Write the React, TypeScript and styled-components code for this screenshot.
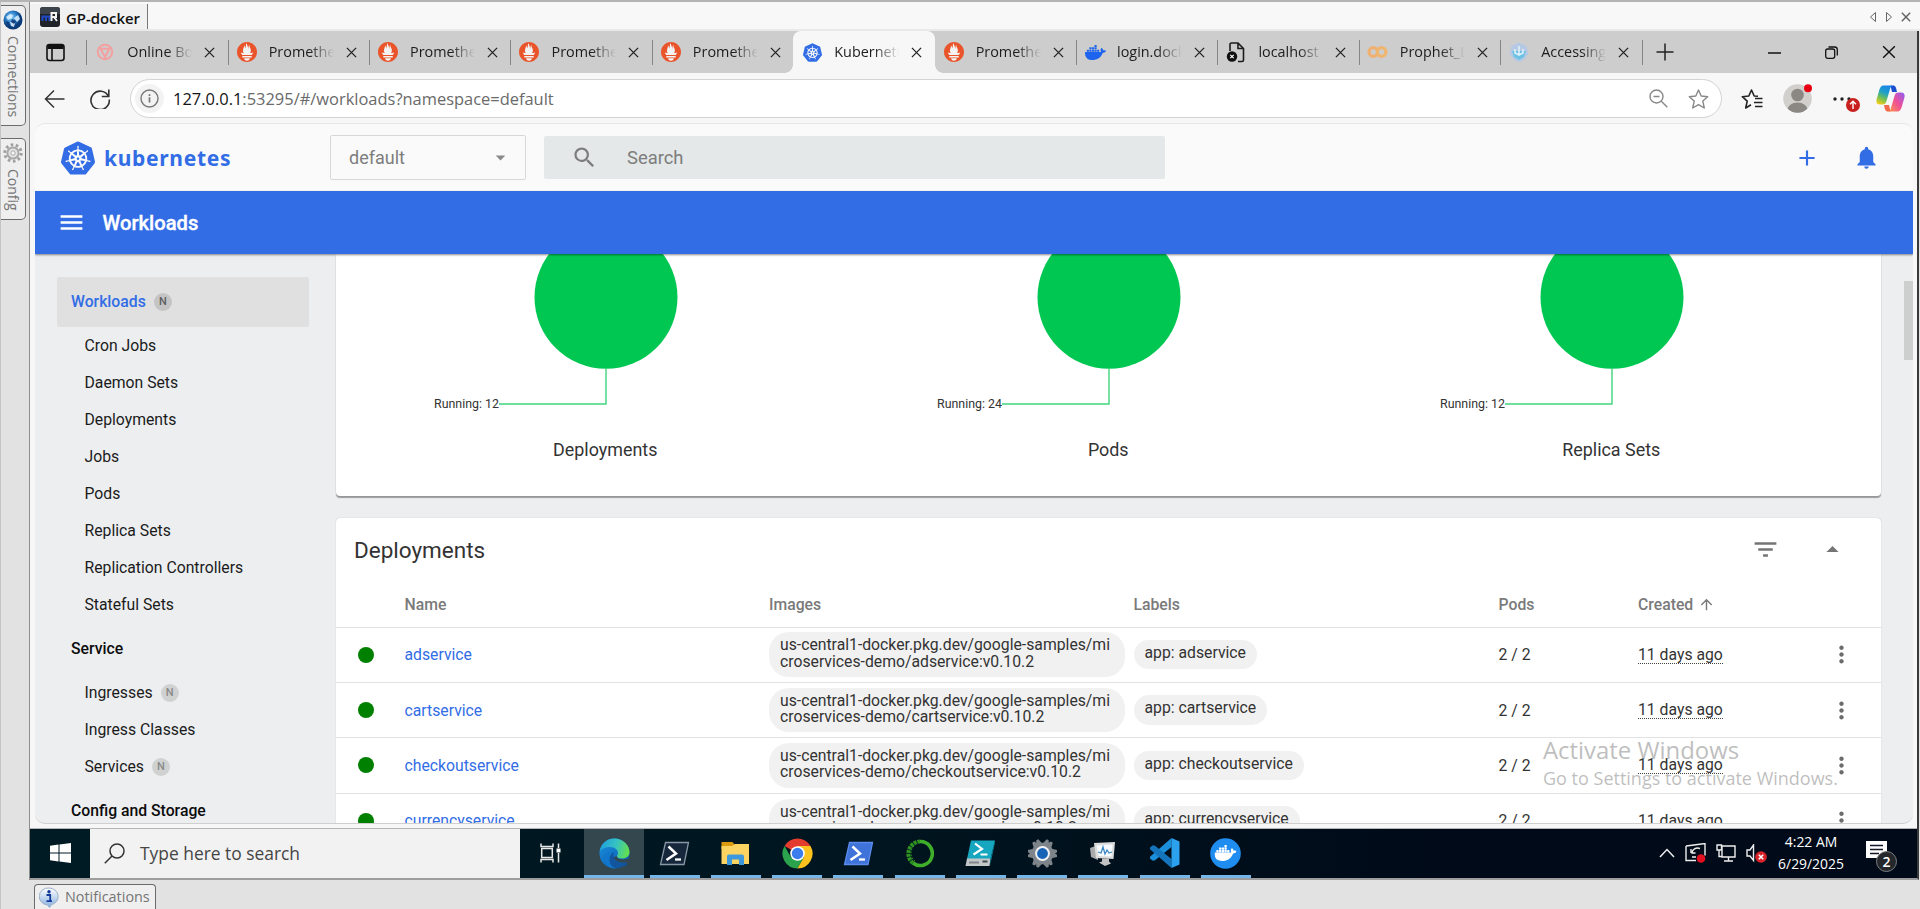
import React from "react";
import styled, { createGlobalStyle, css } from "styled-components";
import { SiPrometheus, SiKubernetes, SiDocker } from "react-icons/si";
import {
  MdSearch,
  MdNotifications,
  MdAdd,
  MdMenu,
  MdFilterList,
  MdArrowDropDown,
  MdArrowDropUp,
  MdMoreVert,
  MdArrowUpward,
} from "react-icons/md";

const UI = `"Open Sans", "Noto Sans", sans-serif`;
const BLUE = "#326de6";
const CHROME = "#f7f7f7";

const GlobalStyle = createGlobalStyle`
  *, *::before, *::after { box-sizing: border-box; }
  body { margin: 0; background: #e2e2e2; overflow: hidden; }
  svg { display: block; flex: none; }
`;

/* ---------- remote manager shell ---------- */

const Shell = styled.div`
  display: grid;
  grid-template-columns: 29px 1fr;
  grid-template-rows: 878px 29px;
  width: 1920px;
  height: 909px;
  background: #e2e2e2;
  border-top: 2px solid #b4b4b4;
  font-family: ${UI};
  color: #222;
  overflow: hidden;
`;

const DockRail = styled.aside`
  display: flex;
  flex-direction: column;
  gap: 12px;
  padding-top: 3px;
  border-left: 1px solid #c4c4c4;
`;

const DockTab = styled.div<{ $height: number }>`
  display: flex;
  flex-direction: column;
  align-items: center;
  gap: 6px;
  width: 25px;
  height: ${(p) => p.$height}px;
  padding-top: 4px;
  border: 1.5px solid #6b6b6b;
  border-left: none;
  border-radius: 0 5px 5px 0;
  background: #efefef;
`;

const DockLabel = styled.span`
  writing-mode: vertical-rl;
  font-size: 14px;
  line-height: 20px;
  color: #757575;
`;

const Session = styled.main`
  display: flex;
  flex-direction: column;
  min-width: 0;
  border-left: 1px solid #8e8e8e;
`;

const SessionBar = styled.div`
  display: flex;
  justify-content: space-between;
  height: 29px;
  flex: none;
  background: #f8f8f8;
  border-bottom: 2px solid #e9e9e9;
`;

const SessionTab = styled.div`
  display: flex;
  align-items: center;
  gap: 6px;
  width: 118px;
  height: 25px;
  margin-top: 2px;
  padding-left: 10px;
  border-right: 1.5px solid #777;
  background: #f1f1f1;
  font-size: 14.9px;
  font-weight: 600;
  color: #111;
`;

const SessionName = styled.span`
  line-height: 20px;
  padding-top: 3px;
`;

const SessionControls = styled.div`
  display: flex;
  align-items: center;
  gap: 8px;
  padding: 2px 9px 0 0;
`;

const BottomDock = styled.footer`
  grid-column: 1 / -1;
  display: flex;
  align-items: flex-end;
  padding-left: 33px;
  border-left: 1px solid #c4c4c4;
`;

const NotificationsTab = styled.div`
  display: flex;
  align-items: center;
  gap: 6px;
  width: 122px;
  height: 25px;
  padding-left: 4px;
  border: 1.5px solid #6b6b6b;
  border-bottom: none;
  border-radius: 4px 4px 0 0;
  background: #efefef;
  font-size: 14.4px;
  line-height: 20px;
  color: #757575;
`;

/* ---------- browser chrome ---------- */

const Desktop = styled.div`
  display: flex;
  flex-direction: column;
  width: 1889px;
  height: 849px;
  flex: none;
  border-right: 2px solid #3a3a3a;
  border-bottom: 2px solid #9d9d9d;
`;

const TabStrip = styled.div`
  display: flex;
  align-items: center;
  height: 42px;
  flex: none;
  background: #cdcdcd;
`;

const TabActions = styled.div`
  display: flex;
  align-items: center;
  width: 56.3px;
  padding-left: 16px;
`;

const Tab = styled.div<{ $active?: boolean; $divider?: boolean }>`
  position: relative;
  display: flex;
  align-items: center;
  width: 141.4px;
  height: 42px;
  padding-left: 9px;
  flex: none;
  &::before {
    content: "";
    position: absolute;
    left: 0;
    top: 9px;
    width: 1px;
    height: 25px;
    background: ${(p) => (p.$divider ? "#858585" : "transparent")};
  }
  ${(p) =>
    p.$active &&
    css`
      background: ${CHROME};
      border-radius: 8px 8px 0 0;
      &::before {
        left: -8px;
        top: auto;
        bottom: 0;
        width: 8px;
        height: 8px;
        background: radial-gradient(circle at 0 0, transparent 7.5px, ${CHROME} 8px);
      }
      &::after {
        content: "";
        position: absolute;
        right: -8px;
        bottom: 0;
        width: 8px;
        height: 8px;
        background: radial-gradient(circle at 100% 0, transparent 7.5px, ${CHROME} 8px);
      }
    `}
`;

const TabIcon = styled.span`
  display: flex;
  justify-content: center;
  width: 20px;
  margin-right: 12px;
`;

const TabTitle = styled.span`
  width: 65px;
  margin-right: 12px;
  overflow: hidden;
  white-space: nowrap;
  font-size: 14.4px;
  line-height: 20px;
  color: #1c1c1c;
  mask-image: linear-gradient(90deg, #000 62%, transparent 100%);
`;

const NewTab = styled.div`
  display: flex;
  align-items: center;
  width: 60px;
  height: 25px;
  padding-left: 13px;
  border-left: 1px solid #858585;
`;

const WindowControls = styled.div`
  display: flex;
  align-items: center;
  gap: 44px;
  margin-left: auto;
  padding-right: 21px;
`;

const Toolbar = styled.div`
  display: flex;
  align-items: center;
  height: 50px;
  flex: none;
  padding: 1px 0 0 14px;
  background: ${CHROME};
`;

const NavButtons = styled.div`
  display: flex;
  gap: 24px;
  width: 86px;
`;

const AddressBar = styled.div`
  display: flex;
  align-items: center;
  width: 1592px;
  height: 39px;
  padding: 0 12px 0 4px;
  border: 1.5px solid #d3d3d3;
  border-radius: 20px;
  background: #fff;
`;

const SiteInfo = styled.span`
  display: grid;
  place-items: center;
  width: 29px;
  height: 29px;
  margin-right: 9px;
  border-radius: 50%;
  background: #f3f3f3;
`;

const Url = styled.span`
  flex: 1;
  font-size: 16.45px;
  line-height: 22px;
  color: #6a6a6a;
`;

const UrlHost = styled.span`
  color: #151515;
`;

const AddressActions = styled.div`
  display: flex;
  align-items: center;
  gap: 20px;
`;

const ToolbarActions = styled.div`
  display: flex;
  align-items: center;
  padding-left: 19px;
`;

const Avatar = styled.div`
  position: relative;
  margin: 0 18px 0 20px;
`;

const More = styled.div`
  position: relative;
  width: 38px;
  margin-right: 8px;
  padding-left: 3px;
`;

const UpdateBadge = styled.span`
  position: absolute;
  left: 16px;
  top: 1px;
`;

/* ---------- dashboard ---------- */

const Viewport = styled.div`
  padding: 0 4px 4px 5px;
  height: 705.5px;
  flex: none;
  background: ${CHROME};
  border-bottom: 1px solid #b5b5b5;
`;

const Dashboard = styled.div`
  position: relative;
  display: flex;
  flex-direction: column;
  height: 701px;
  border-top: 1px solid #e6e6e6;
  border-bottom: 1px solid #cfcfcf;
  border-radius: 10px;
  background: #eceef0;
  overflow: hidden;
  font-family: Roboto, sans-serif;
`;

const AppHeader = styled.header`
  display: flex;
  align-items: center;
  height: 67px;
  flex: none;
  background: #fafafa;
`;

const Brand = styled.div`
  display: flex;
  align-items: center;
  gap: 9px;
  width: 295px;
  padding-left: 26px;
  color: ${BLUE};
`;

const Wordmark = styled.span`
  font-family: "Noto Sans", sans-serif;
  font-size: 21px;
  font-weight: 700;
  line-height: 28px;
  letter-spacing: 0.7px;
`;

const NamespaceSelect = styled.div`
  display: flex;
  align-items: center;
  justify-content: space-between;
  width: 196px;
  height: 45px;
  margin-right: 18px;
  padding: 0 13px 0 18px;
  border: 1px solid #d8d8d8;
  border-radius: 2px;
  font-size: 18px;
  color: #7d7d7d;
`;

const SearchBox = styled.div`
  display: flex;
  align-items: center;
  gap: 29px;
  width: 621px;
  height: 43px;
  padding-left: 27px;
  border-radius: 2px;
  background: #e4e8e9;
  font-size: 18.4px;
  color: #7d7d7d;
`;

const HeaderActions = styled.div`
  display: flex;
  align-items: center;
  gap: 33px;
  margin-left: auto;
  padding-right: 33px;
  color: ${BLUE};
`;

const TitleBar = styled.div`
  position: relative;
  display: flex;
  align-items: center;
  gap: 16.5px;
  height: 63px;
  flex: none;
  padding-left: 22px;
  background: ${BLUE};
  color: #fff;
  font-size: 20.2px;
  font-weight: 500;
  -webkit-text-stroke: 0.35px #fff;
  box-shadow: 0 1px 2px rgba(0, 0, 0, 0.45);
`;

const Body = styled.div`
  display: flex;
  flex: 1;
  min-height: 0;
`;

const Sidebar = styled.nav`
  width: 300.5px;
  flex: none;
  padding: 22.7px 27px 0 22px;
  font-size: 15.75px;
  color: #1b1b1b;
`;

const NavRow = styled.div<{ $kind: "active" | "group" | "item" }>`
  display: flex;
  align-items: center;
  gap: 8px;
  white-space: nowrap;
  ${(p) =>
    p.$kind === "item" &&
    css`
      height: 37.07px;
      padding-left: 27.5px;
    `}
  ${(p) =>
    p.$kind === "group" &&
    css`
      height: 51px;
      padding-left: 14px;
      font-weight: 500;
      color: #0c0c0c;
    `}
  ${(p) =>
    p.$kind === "active" &&
    css`
      height: 50px;
      padding-left: 14px;
      border-radius: 2px;
      background: #e0e0e0;
      font-weight: 500;
      color: ${BLUE};
    `}
`;

const NamespacedMark = styled.span<{ $strong?: boolean }>`
  display: grid;
  place-items: center;
  width: 18px;
  height: 18px;
  border-radius: 50%;
  background: ${(p) => (p.$strong ? "#c4c4c4" : "#d0d2d2")};
  font-size: 11px;
  font-weight: 500;
  line-height: 1;
  color: ${(p) => (p.$strong ? "#5e5e5e" : "#8a8a8a")};
`;

const Content = styled.section`
  display: flex;
  flex-direction: column;
  gap: 22px;
  width: 1545.5px;
  color: #333;
`;

const StatusCard = styled.div`
  display: grid;
  grid-template-columns: repeat(3, 503px);
  justify-content: center;
  height: 241.5px;
  flex: none;
  border-radius: 0 0 4px 4px;
  background: #fff;
  box-shadow: 0 2px 1px rgba(0, 0, 0, 0.35), 0 0 1px rgba(0, 0, 0, 0.2);
`;

const Chart = styled.figure`
  display: flex;
  flex-direction: column;
  align-items: center;
  margin: 0;
`;

const ChartTitle = styled.figcaption`
  margin-top: 26px;
  font-size: 17.9px;
  line-height: 22px;
`;

const TableCard = styled.div`
  width: 100%;
  border-radius: 4px 4px 0 0;
  background: #fff;
  box-shadow: 0 0 1px rgba(0, 0, 0, 0.3);
`;

const TableTitle = styled.div`
  display: flex;
  align-items: center;
  height: 64px;
  padding: 0 34px 0 18.5px;
  font-size: 22.5px;
`;

const TableTools = styled.div`
  display: flex;
  align-items: center;
  gap: 38px;
  margin-left: auto;
  color: #757575;
`;

const rowColumns = css`
  display: grid;
  grid-template-columns: 47px 364.5px 364.5px 365px 139.5px 191px 1fr;
  align-items: center;
  padding-left: 22px;
  border-bottom: 1.4px solid #e2e2e2;
  font-size: 15.75px;
`;

const HeadRow = styled.div`
  ${rowColumns}
  height: 46px;
  font-weight: 500;
  color: #7a7a7a;
`;

const DataRow = styled.div`
  ${rowColumns}
  height: 55.4px;
`;

const SortLabel = styled.span`
  display: flex;
  align-items: center;
  gap: 5px;
`;

const StatusDot = styled.span`
  width: 16px;
  height: 16px;
  border-radius: 50%;
  background: #008000;
`;

const NameLink = styled.a`
  color: ${BLUE};
`;

const Chip = styled.span<{ $wide?: boolean }>`
  justify-self: start;
  width: ${(p) => (p.$wide ? "356px" : "auto")};
  padding: ${(p) => (p.$wide ? "5px 11px 7px" : "5px 11px 8px")};
  border-radius: 20px;
  background: #f1f1f1;
  line-height: 16.3px;
  word-break: break-all;
`;

const Age = styled.span`
  justify-self: start;
  line-height: 17px;
  border-bottom: 1.5px dotted #444;
`;

const RowMenu = styled.span`
  display: flex;
  justify-content: center;
  width: 24px;
  color: #6c6c6c;
`;

const ScrollThumb = styled.div`
  position: absolute;
  right: 0;
  top: 157px;
  width: 9px;
  height: 79px;
  background: #cdcfcf;
`;

const Watermark = styled.div`
  position: absolute;
  left: 1508px;
  top: 610px;
  font-family: ${UI};
  color: rgba(125, 125, 125, 0.5);
  white-space: nowrap;
`;

const WatermarkTitle = styled.div`
  font-size: 23.9px;
  line-height: 32px;
`;

const WatermarkText = styled.div`
  font-size: 18px;
  line-height: 25px;
`;

/* ---------- windows taskbar ---------- */

const Taskbar = styled.div`
  display: flex;
  flex: 1;
  min-height: 0;
  background: linear-gradient(90deg, #001b24 0%, #00151f 45%, #000a18 75%, #000a18 100%);
  color: #fff;
`;

const StartButton = styled.div`
  display: grid;
  place-items: center;
  width: 60px;
`;

const TaskSearch = styled.div`
  display: flex;
  align-items: center;
  gap: 15px;
  width: 430px;
  padding-left: 14px;
  background: #f2f2f2;
  font-size: 17.4px;
  color: #454545;
`;

const TaskView = styled.div`
  display: grid;
  place-items: center;
  width: 64px;
  padding-right: 4px;
`;

const TaskButton = styled.div<{ $active?: boolean }>`
  position: relative;
  display: flex;
  align-items: center;
  justify-content: center;
  width: ${(p) => (p.$active ? "60px" : "61.25px")};
  background: ${(p) => (p.$active ? "#34474f" : "transparent")};
  &::after {
    content: "";
    position: absolute;
    left: ${(p) => (p.$active ? "0" : "5.6px")};
    right: ${(p) => (p.$active ? "0" : "5.6px")};
    bottom: 0;
    height: 3px;
    background: #76b5e8;
  }
`;

const Tray = styled.div`
  display: flex;
  align-items: center;
  margin-left: auto;
  padding-right: 3px;
`;

const TrayIcons = styled.div`
  display: flex;
  align-items: center;
  gap: 10px;
  margin-right: 11px;
`;

const Clock = styled.div`
  width: 66px;
  margin-right: 22px;
  text-align: center;
  font-size: 13.9px;
  line-height: 22px;
  white-space: nowrap;
`;

const ActionCenter = styled.div`
  position: relative;
  width: 48px;
  height: 24px;
`;

const CountBadge = styled.span`
  position: absolute;
  left: 10px;
  top: 10px;
  display: grid;
  place-items: center;
  width: 21px;
  height: 21px;
  border: 1.5px solid #7d7f82;
  border-radius: 50%;
  background: #24272b;
  font-size: 14px;
  font-weight: 600;
  line-height: 1;
`;

/* ---------- drawings ---------- */

const Cross = ({ size = 11, color = "#222", w = 1.4 }) => (
  <svg width={size} height={size} viewBox="0 0 12 12" stroke={color} strokeWidth={w} fill="none">
    <path d="M1 1l10 10M11 1L1 11" />
  </svg>
);

const Globe = () => (
  <svg width="20" height="20" viewBox="0 0 20 20">
    <defs>
      <radialGradient id="globe" cx=".4" cy=".35">
        <stop offset="0" stopColor="#8fd0fb" />
        <stop offset=".6" stopColor="#2b7fc9" />
        <stop offset="1" stopColor="#0a3a78" />
      </radialGradient>
    </defs>
    <circle cx="10" cy="10" r="9.5" fill="url(#globe)" />
    <path d="M3 7l4-3 3 1-1 3-4 2zM11 8l4-3 2 4-3 3zM7 12l5 1-1 4-3-1z" fill="#e2f3ff" opacity=".85" />
    <path d="M9 9l4 2-2 3-3-2zM3 11l3 1 1 4-3-2z" fill="#0c2f66" opacity=".8" />
  </svg>
);

const SilverGear = () => (
  <svg width="20" height="20" viewBox="0 0 20 20">
    <circle cx="10" cy="10" r="8.200" fill="none" stroke="#a0a0a0" strokeWidth="3" strokeDasharray="2.6 2.55" />
    <circle cx="10" cy="10" r="5.600" fill="#e4e4e4" stroke="#a8a8a8" strokeWidth="2" />
    <circle cx="10" cy="10" r="2.200" fill="#f5f5f5" stroke="#a8a8a8" />
  </svg>
);

const RemoteLogo = () => (
  <svg width="20" height="20" viewBox="0 0 20 20">
    <rect width="20" height="20" rx="3" fill="#20242a" />
    <path d="M0 3a3 3 0 013-3h14a3 3 0 013 3v4H0z" fill="#3d434b" />
    <path d="M2.500 14V9.500h7V14M6 9.500V14" fill="none" stroke="#1f49c4" strokeWidth="2" />
    <path d="M11.500 14V6h4.500v4h-4.500M14 10l3 4" fill="none" stroke="#f4f4f4" strokeWidth="2" />
  </svg>
);

const InfoBubble = () => (
  <svg width="20" height="21" viewBox="0 0 20 21">
    <defs>
      <linearGradient id="bubble" x2="0" y2="1">
        <stop offset="0" stopColor="#fff" />
        <stop offset="1" stopColor="#86aede" />
      </linearGradient>
    </defs>
    <path d="M10 1a9 8.500 0 012.500 16.700L10.500 20.500 8.500 18A9 8.500 0 0110 1z" fill="url(#bubble)" stroke="#9cb0ca" />
    <circle cx="10" cy="4.800" r="1.700" fill="#123c9c" />
    <path d="M7.500 8h3.700v6M7.500 14.200h5.500" stroke="#123c9c" strokeWidth="1.800" fill="none" />
  </svg>
);

const OnlineBoutique = () => (
  <svg width="18" height="18" viewBox="0 0 18 18" fill="none" stroke="#f2a0a0" strokeWidth="2">
    <circle cx="9" cy="9" r="7.200" />
    <path d="M4.500 5.800h9L9 14zM3 4l2 2M15 4l-2 2M9 14v2.500" />
  </svg>
);

const Prometheus = () => (
  <svg width="20" height="20" viewBox="0 0 24 24">
    <circle cx="12" cy="12" r="11" fill="#fff" opacity=".75" />
    <SiPrometheus size={24} color="#e9542b" />
  </svg>
);

const BrokenPage = () => (
  <svg width="20" height="21" viewBox="0 0 20 21" fill="none" stroke="#1c1c1c" strokeWidth="1.600">
    <path d="M4 9V2.500a1.500 1.500 0 011.500-1.500H12l5.500 5.500V18a1.500 1.500 0 01-1.500 1.500h-4M12 1v5.500h5.500" />
    <circle cx="6" cy="14.500" r="5.200" fill="#111" stroke="none" />
    <path d="M4.300 12.800l3.400 3.400M7.700 12.800l-3.400 3.400" stroke="#fff" strokeWidth="1.200" />
  </svg>
);

const Colab = () => (
  <svg width="21" height="14" viewBox="0 0 21 14" fill="none" strokeWidth="3.200">
    <circle cx="6.300" cy="7" r="4.300" stroke="#efb071" />
    <circle cx="14.600" cy="7" r="4.300" stroke="#f0b56e" />
  </svg>
);

const Accessing = () => (
  <svg width="20" height="20" viewBox="0 0 20 20">
    <path d="M10 .5l7.500 3.600 2 8L14 18.500 10 20l-4-1.500L.5 12l2-8z" fill="#b5c9e4" />
    <path d="M3 9h14l-2 6-5 3-5-3z" fill="#6fc2e4" />
    <path d="M10 4v10M6 7v4l4 2 4-2V7" stroke="#e3f3fc" strokeWidth="1.500" fill="none" />
  </svg>
);

const Person = () => (
  <svg width="29" height="29" viewBox="0 0 29 29">
    <defs>
      <clipPath id="face"><circle cx="14.500" cy="14.500" r="14.300" /></clipPath>
    </defs>
    <g clipPath="url(#face)">
      <rect width="29" height="29" fill="#d2d0cc" />
      <circle cx="14.500" cy="11" r="6.300" fill="#8b8884" />
      <ellipse cx="14.500" cy="26.500" rx="10.200" ry="8" fill="#8b8884" />
    </g>
    <circle cx="25" cy="4.300" r="4" fill="#e60012" />
  </svg>
);

const Copilot = () => (
  <svg width="29" height="27" viewBox="0 0 29 27">
    <defs>
      <linearGradient id="cpA" x1="0.600" y1="0" x2="0.200" y2="1">
        <stop offset="0" stopColor="#1a86e8" />
        <stop offset=".35" stopColor="#1fa0c8" />
        <stop offset=".65" stopColor="#6cbf5a" />
        <stop offset="1" stopColor="#f7cf14" />
      </linearGradient>
      <linearGradient id="cpB" x1="1" y1="0" x2="0" y2="1">
        <stop offset="0" stopColor="#8f5cf4" />
        <stop offset=".5" stopColor="#ef5096" />
        <stop offset="1" stopColor="#ff9648" />
      </linearGradient>
    </defs>
    <path d="M14.500 .5H17c2.800 0 3.200 2.500 4 6.500h-5z" fill="#1a4fd0" />
    <path d="M14.500 26.500H12c-2.800 0-3.200-2.500-4-6.500h5z" fill="#f26a4a" />
    <path d="M8 .5h8.500c-1.500.5-2 2-2.600 4L10.500 16c-.8 2.500-1.500 3.500-4 3.500H4c-3.200 0-4.200-2-3.300-5.500L3 6C4 2.500 5 .5 8 .5z" fill="url(#cpA)" />
    <path d="M21 26.500h-8.500c1.500-.5 2-2 2.600-4L18.500 11c.8-2.500 1.500-3.500 4-3.500H25c3.200 0 4.200 2 3.300 5.500L26 21c-1 3.500-2 5.500-5 5.500z" fill="url(#cpB)" />
  </svg>
);

const EdgeLogo = () => (
  <svg width="31" height="31" viewBox="0 0 31 31">
    <defs>
      <linearGradient id="edgeTop" x1="0" x2="1" y1=".3" y2=".5">
        <stop offset="0" stopColor="#1f9fe0" />
        <stop offset=".55" stopColor="#37c3c0" />
        <stop offset="1" stopColor="#62df4d" />
      </linearGradient>
      <linearGradient id="edgeBody" x1="0" x2=".8" y1="0" y2="1">
        <stop offset="0" stopColor="#1b93e0" />
        <stop offset="1" stopColor="#0b5bb0" />
      </linearGradient>
    </defs>
    <circle cx="15.500" cy="15.500" r="15" fill="url(#edgeBody)" />
    <path d="M.5 14C2 5 8 .5 15.500.5 24 .5 30.500 7 30.500 14c0 4-3 6.500-7.500 6.500-3 0-5-1-5-2.300 0-1 1-1.500 1-3.200 0-3-3-6-8-6C6 9 2 11 .5 14z" fill="url(#edgeTop)" />
    <path d="M11 14c-4 5-1 13 6 16.500C10 31 4 25 5 19c.5-3 3-5 6-5z" fill="#1277cc" />
    <path d="M14.500 14c-5 6 2 13.500 14.500 9l1.500 1-2 4H19C11 26 9 18 14.500 14z" fill="#134e8f" />
    <path d="M18 18.300c0 3.500 7 4 12 2l1 11-4-6c-4 2-13 1-12.500-6z" fill="#34474f" />
    <path d="M28.500 24c-3 4.500-8 6.500-12 6.300C9 28 9 17 15 14c-3 6 4 12.500 13.500 10z" fill="#11559f" />
  </svg>
);

const Terminal = ({ fill, edge }: { fill: string; edge: string }) => (
  <svg width="31" height="25" viewBox="0 0 31 25">
    <path d="M6.500 1.500h23L25 23.500H1.500z" fill={fill} stroke={edge} strokeWidth="1.300" />
    <path d="M9.500 5.500l7.500 7-9.500 6.500" fill="none" stroke="#fff" strokeWidth="2.500" />
    <path d="M16 18.500h6" stroke="#fff" strokeWidth="2.300" />
  </svg>
);

const Folder = () => (
  <svg width="29" height="25" viewBox="0 0 29 25">
    <path d="M.5 1h11l2.500 3v4H.5z" fill="#dc9c10" />
    <path d="M.5 5H11l3-2h14v20H.5z" fill="#fcd462" />
    <path d="M6 24v-8.500a2 2 0 012-2h13a2 2 0 012 2V24h-5v-5.500h-7V24z" fill="#3d98dc" />
  </svg>
);

const Chrome = () => (
  <svg width="31" height="31" viewBox="0 0 32 32">
    <path d="M16 16L2.600 8.200A15.500 15.500 0 0129.400 8.200z" fill="#e33b2e" />
    <path d="M2.600 8.200A15.500 15.500 0 0016 31.500L22.500 19.600 9.300 19.800z" fill="#2ba24c" />
    <path d="M29.400 8.200A15.500 15.500 0 0116 31.500L22.700 19.700 16 8.200z" fill="#fcc31e" />
    <circle cx="16" cy="16" r="7.500" fill="#fff" />
    <circle cx="16" cy="16" r="5.900" fill="#3b7ded" />
  </svg>
);

const Anaconda = () => (
  <svg width="28" height="29" viewBox="0 0 28 29" fill="none">
    <path d="M14 2.500a12 12 0 11-7 21.500" stroke="#3fae2a" strokeWidth="3.600" />
    <path d="M7 24A12 12 0 0114 2.500" stroke="#2f9422" strokeWidth="4" strokeDasharray="3 .8" />
    <path d="M9 22A10 10 0 019 6" stroke="#3fae2a" strokeWidth="1" strokeDasharray="1.500 1.500" />
  </svg>
);

const PowerShellIse = () => (
  <svg width="31" height="27" viewBox="0 0 31 27">
    <path d="M6 .5h24L25.500 19H2z" fill="#17a6bf" />
    <path d="M2 18.500h23.500l-1 7.500H.5z" fill="#c3c7ca" />
    <path d="M4 22.500h10" stroke="#80868b" strokeWidth="2" />
    <path d="M17.500 21.500h5" stroke="#3a4a50" strokeWidth="2" />
    <path d="M25.500 19l4-17 .5.500L25 26z" fill="#0d7f96" />
    <path d="M10 3.500l7 5.500-8.500 5.500M15.500 14.500h7" fill="none" stroke="#fff" strokeWidth="2.200" />
  </svg>
);

const Settings = () => (
  <svg width="31" height="31" viewBox="0 0 31 31">
    <g fill="#7d848a">
      {[0, 60, 120, 180, 240, 300].map((a) => (
        <path key={a} d="M10.500 7.500L12 1h2.300l1.200 2 1.200-2H19l1.500 6.500z" transform={`rotate(${a + 30} 15.500 15.500)`} />
      ))}
      <circle cx="15.500" cy="15.500" r="10.800" />
    </g>
    <circle cx="15.500" cy="15.500" r="7.400" fill="#f0f2f4" />
    <circle cx="15.500" cy="15.500" r="5.400" fill="#1763b6" />
  </svg>
);

const Monitor = () => (
  <svg width="28" height="27" viewBox="0 0 28 27">
    <path d="M1 8l8-3v15l-7-3z" fill="#a9aaac" />
    <path d="M5 3l21-1-1.500 17L7 18z" fill="#dcdcdc" />
    <path d="M7.500 5.500l16-1-1 12-13-.5z" fill="#f7fbff" />
    <path d="M9 12l3 1 2-6 2 7 2-4 2 3 3-1" stroke="#3d88c4" strokeWidth="1.300" fill="none" />
    <path d="M13 18.500h7v3l2 2-6 2.500-6-3.500 3-1z" fill="#c2c2c2" />
  </svg>
);

const VsCode = () => (
  <svg width="31" height="30" viewBox="0 0 31 30">
    <path d="M22.500 0v9L6 22.300l-2.200.4L1 20.500v-1.700z" fill="#1b8fdb" />
    <path d="M22.500 30v-9L6 7.700l-2.200-.4L1 9.500v1.700z" fill="#1475bd" />
    <path d="M22.500 0l8 3.500v23l-8 3.500z" fill="#2ca2ef" />
  </svg>
);

const DockerApp = () => (
  <svg width="31" height="31" viewBox="0 0 31 31">
    <circle cx="15.500" cy="15.500" r="15.300" fill="#1f8cef" />
    <g transform="translate(4.500 4)">
      <SiDocker size={22} color="#fff" />
    </g>
  </svg>
);

/* ---------- data ---------- */

const prom = { title: "Prometheus", icon: <Prometheus /> };
const tabs: { title: string; icon: React.ReactNode; active?: boolean; bare?: boolean }[] = [
  { title: "Online Boutique", icon: <OnlineBoutique /> },
  prom,
  prom,
  prom,
  prom,
  { title: "Kubernetes", icon: <SiKubernetes size={19} color={BLUE} />, active: true },
  { ...prom, bare: true },
  { title: "login.docker", icon: <SiDocker size={21} color="#1d63ed" /> },
  { title: "localhost", icon: <BrokenPage /> },
  { title: "Prophet_LS", icon: <Colab /> },
  { title: "Accessing", icon: <Accessing /> },
];

const nav: ["active" | "group" | "item", string, boolean?][] = [
  ["active", "Workloads", true],
  ["item", "Cron Jobs"],
  ["item", "Daemon Sets"],
  ["item", "Deployments"],
  ["item", "Jobs"],
  ["item", "Pods"],
  ["item", "Replica Sets"],
  ["item", "Replication Controllers"],
  ["item", "Stateful Sets"],
  ["group", "Service"],
  ["item", "Ingresses", true],
  ["item", "Ingress Classes"],
  ["item", "Services", true],
  ["group", "Config and Storage"],
];

const charts = [
  { title: "Deployments", running: 12 },
  { title: "Pods", running: 24 },
  { title: "Replica Sets", running: 12 },
];

const services = ["adservice", "cartservice", "checkoutservice", "currencyservice"];

const taskApps = [
  <Terminal key="t" fill="#16273c" edge="#8a97a6" />,
  <Folder key="f" />,
  <Chrome key="c" />,
  <Terminal key="p" fill="#3f73d9" edge="#5b8bea" />,
  <Anaconda key="a" />,
  <PowerShellIse key="i" />,
  <Settings key="s" />,
  <Monitor key="m" />,
  <VsCode key="v" />,
  <DockerApp key="d" />,
];

/* ---------- sections ---------- */

const BrowserTabs = () => (
  <TabStrip>
    <TabActions>
      <svg width="19" height="19" viewBox="0 0 19 19" fill="none" stroke="#111" strokeWidth="1.600">
        <rect x="1" y="1.500" width="17" height="16" rx="2.500" />
        <path d="M1.500 4h16" strokeWidth="4" />
        <path d="M6 5v12" />
      </svg>
    </TabActions>
    {tabs.map((t, i) => (
      <Tab key={i} $active={t.active} $divider={!t.active && !t.bare}>
        <TabIcon>{t.icon}</TabIcon>
        <TabTitle>{t.title}</TabTitle>
        <Cross />
      </Tab>
    ))}
    <NewTab>
      <svg width="18" height="18" viewBox="0 0 18 18" stroke="#222" strokeWidth="1.500">
        <path d="M9 .5v17M.5 9h17" />
      </svg>
    </NewTab>
    <WindowControls>
      <svg width="13" height="12" viewBox="0 0 13 12" stroke="#111" strokeWidth="1.500"><path d="M0 7h13" /></svg>
      <svg width="13" height="13" viewBox="0 0 13 13" fill="none" stroke="#111" strokeWidth="1.300">
        <rect x=".7" y="3" width="9" height="9.300" rx="2" />
        <path d="M3.500 1h6A2.700 2.700 0 0112.300 3.500v6" />
      </svg>
      <Cross size={14} color="#111" w={1.2} />
    </WindowControls>
  </TabStrip>
);

const BrowserToolbar = () => (
  <Toolbar>
    <NavButtons>
      <svg width="21" height="20" viewBox="0 0 21 20" fill="none" stroke="#333" strokeWidth="1.500">
        <path d="M20.500 10H1.500M10 1.500L1.500 10l8.500 8.500" />
      </svg>
      <svg width="22" height="20" viewBox="0 0 22 20" fill="none" stroke="#333" strokeWidth="1.600">
        <path d="M19.500 7.500A9.200 9.200 0 1020.300 10.500M19.800 .5v7h-7" />
      </svg>
    </NavButtons>
    <AddressBar>
      <SiteInfo>
        <svg width="19" height="19" viewBox="0 0 19 19" fill="none" stroke="#777" strokeWidth="1.400">
          <circle cx="9.500" cy="9.500" r="8.500" />
          <path d="M9.500 8.300v5.200M9.500 5.300v1.600" strokeWidth="1.700" />
        </svg>
      </SiteInfo>
      <Url><UrlHost>127.0.0.1</UrlHost>:53295/#/workloads?namespace=default</Url>
      <AddressActions>
        <svg width="19" height="19" viewBox="0 0 19 19" fill="none" stroke="#888" strokeWidth="1.400">
          <circle cx="7.500" cy="7.500" r="6.500" />
          <path d="M4.500 7.500h6M12.300 12.300l6 6" />
        </svg>
        <svg width="21" height="20" viewBox="0 0 21 20" fill="none" stroke="#888" strokeWidth="1.400" strokeLinejoin="round">
          <path d="M10.500 1l2.700 6 6.500.7-4.900 4.400 1.500 6.900-5.800-3.400L4.700 19l1.500-6.900L1.300 7.700l6.500-.7z" />
        </svg>
      </AddressActions>
    </AddressBar>
    <ToolbarActions>
      <svg width="22" height="20" viewBox="0 0 22 20" fill="none" stroke="#222" strokeWidth="1.600" strokeLinejoin="round">
        <path d="M17 7.300l-3.800-.3L10.500 1 7.800 7l-6.500.7 4.900 4.400L4.700 19l5.300-3.200M14 9.500h7.500M13 13.500h8.500M14 17.500h7.500" />
      </svg>
      <Avatar><Person /></Avatar>
      <More>
        <svg width="18" height="4" viewBox="0 0 18 4" fill="#222">
          <circle cx="2" cy="2" r="1.700" /><circle cx="9" cy="2" r="1.700" /><circle cx="16" cy="2" r="1.700" />
        </svg>
        <UpdateBadge>
          <svg width="14" height="14" viewBox="0 0 14 14">
            <circle cx="7" cy="7" r="7" fill="#c8201f" />
            <path d="M7 11V3.500M4 6.300l3-3 3 3" stroke="#fff" strokeWidth="1.400" fill="none" />
          </svg>
        </UpdateBadge>
      </More>
      <Copilot />
    </ToolbarActions>
  </Toolbar>
);

const DeploymentTable = () => (
  <TableCard>
    <TableTitle>
      Deployments
      <TableTools>
        <MdFilterList size={29} />
        <MdArrowDropUp size={29} />
      </TableTools>
    </TableTitle>
    <HeadRow>
      <span />
      <span>Name</span>
      <span>Images</span>
      <span>Labels</span>
      <span>Pods</span>
      <SortLabel>Created <MdArrowUpward size={17} /></SortLabel>
      <span />
    </HeadRow>
    {services.map((s) => (
      <DataRow key={s}>
        <StatusDot />
        <NameLink>{s}</NameLink>
        <Chip $wide>us-central1-docker.pkg.dev/google-samples/microservices-demo/{s}:v0.10.2</Chip>
        <Chip>app: {s}</Chip>
        <span>2 / 2</span>
        <Age>11 days ago</Age>
        <RowMenu><MdMoreVert size={27} /></RowMenu>
      </DataRow>
    ))}
  </TableCard>
);

const KubernetesDashboard = () => (
  <Dashboard>
    <AppHeader>
      <Brand>
        <SiKubernetes size={34} />
        <Wordmark>kubernetes</Wordmark>
      </Brand>
      <NamespaceSelect>default <MdArrowDropDown size={23} color="#8a8a8a" /></NamespaceSelect>
      <SearchBox><MdSearch size={27} />Search</SearchBox>
      <HeaderActions>
        <MdAdd size={26} />
        <MdNotifications size={27} />
      </HeaderActions>
    </AppHeader>
    <TitleBar><MdMenu size={29} />Workloads</TitleBar>
    <Body>
      <Sidebar>
        {nav.map(([kind, label, mark]) => (
          <NavRow key={label} $kind={kind}>
            {label}
            {mark && <NamespacedMark $strong={kind === "active"}>N</NamespacedMark>}
          </NavRow>
        ))}
      </Sidebar>
      <Content>
        <StatusCard>
          {charts.map((c) => (
            <Chart key={c.title}>
              <svg width="503" height="159" viewBox="0 1 503 159">
                <circle cx="252" cy="44.300" r="71.500" fill="#00c752" />
                <path d="M252 115v36H145" fill="none" stroke="#3fd57d" strokeWidth="1.400" />
                <text x="145" y="155" textAnchor="end" fontSize="12.400" fill="#333">Running: {c.running}</text>
              </svg>
              <ChartTitle>{c.title}</ChartTitle>
            </Chart>
          ))}
        </StatusCard>
        <DeploymentTable />
      </Content>
    </Body>
    <ScrollThumb />
    <Watermark>
      <WatermarkTitle>Activate Windows</WatermarkTitle>
      <WatermarkText>Go to Settings to activate Windows.</WatermarkText>
    </Watermark>
  </Dashboard>
);

const WindowsTaskbar = () => (
  <Taskbar>
    <StartButton>
      <svg width="21" height="20" viewBox="0 0 21 20" fill="#fff">
        <path d="M0 2.800l8.500-1.200v7.900H0zM9.500 1.500L21 0v9.500H9.500zM0 10.500h8.500v7.900L0 17.200zM9.500 10.500H21V20L9.500 18.500z" />
      </svg>
    </StartButton>
    <TaskSearch>
      <svg width="21" height="21" viewBox="0 0 21 21" fill="none" stroke="#333" strokeWidth="1.500">
        <circle cx="13" cy="8" r="7" />
        <path d="M8 13L.8 20.300" />
      </svg>
      Type here to search
    </TaskSearch>
    <TaskView>
      <svg width="21" height="20" viewBox="0 0 21 20" fill="none" stroke="#e8e8e8" strokeWidth="1.500">
        <path d="M1 .5V3.500h12V.5M1 19.500V16.500h12v3M1.700 5.500h10.600v9H1.700zM18.500 .5V5M18.500 10v9.500" />
        <rect x="16.500" y="5.500" width="4" height="4" fill="#fff" stroke="none" />
      </svg>
    </TaskView>
    <TaskButton $active><EdgeLogo /></TaskButton>
    {taskApps.map((icon, i) => (
      <TaskButton key={i}>{icon}</TaskButton>
    ))}
    <Tray>
      <TrayIcons>
        <svg width="16" height="10" viewBox="0 0 16 10" fill="none" stroke="#eee" strokeWidth="1.500"><path d="M1 9l7-7.500L15 9" /></svg>
        <svg width="21" height="20" viewBox="0 0 21 20" fill="none" stroke="#eee" strokeWidth="1.400">
          <path d="M1 3l8-1 11-1.500v12M1 3v14.500h10M15 5.500c-4-1.500-8 1-8 4.500h3.500M7 14h4M6 6v4" />
          <circle cx="16" cy="15.500" r="4.300" fill="#e01020" stroke="none" />
        </svg>
        <svg width="20" height="18" viewBox="0 0 20 18" fill="none" stroke="#eee" strokeWidth="1.400">
          <path d="M6 2h13v11H6zM1 1h4.500v5H1zM3 6v6.500h3M12.500 13v4M8 17h9" />
        </svg>
        <svg width="21" height="19" viewBox="0 0 21 19" fill="none" stroke="#eee" strokeWidth="1.400">
          <path d="M7.500 1v15.500L4 12H1V6h3z" />
          <circle cx="15" cy="13" r="5.800" fill="#d8232a" stroke="none" />
          <path d="M12.800 10.800l4.400 4.400M17.200 10.800l-4.400 4.400" stroke="#fff" strokeWidth="1.600" />
        </svg>
      </TrayIcons>
      <Clock>4:22 AM<br />6/29/2025</Clock>
      <ActionCenter>
        <svg width="21" height="22" viewBox="0 0 21 22">
          <path d="M0 0h21v17h-6l-4 4v-4H0z" fill="#fff" />
          <path d="M4 4.500h13M4 8.500h13M4 12.500h9" stroke="#111827" strokeWidth="1.300" />
        </svg>
        <CountBadge>2</CountBadge>
      </ActionCenter>
    </Tray>
  </Taskbar>
);

export default function App() {
  return (
    <Shell>
      <GlobalStyle />
      <DockRail>
        <DockTab $height={121}><Globe /><DockLabel>Connections</DockLabel></DockTab>
        <DockTab $height={82}><SilverGear /><DockLabel>Config</DockLabel></DockTab>
      </DockRail>
      <Session>
        <SessionBar>
          <SessionTab><RemoteLogo /><SessionName>GP-docker</SessionName></SessionTab>
          <SessionControls>
            <svg width="8" height="12" viewBox="0 0 8 12" fill="none" stroke="#666"><path d="M6.500 1.500v9L1.500 6z" /></svg>
            <svg width="8" height="12" viewBox="0 0 8 12" fill="none" stroke="#666"><path d="M1.500 1.500v9l5-4.500z" /></svg>
            <Cross size={10} color="#666" w={1.8} />
          </SessionControls>
        </SessionBar>
        <Desktop>
          <BrowserTabs />
          <BrowserToolbar />
          <Viewport><KubernetesDashboard /></Viewport>
          <WindowsTaskbar />
        </Desktop>
      </Session>
      <BottomDock>
        <NotificationsTab><InfoBubble />Notifications</NotificationsTab>
      </BottomDock>
    </Shell>
  );
}
